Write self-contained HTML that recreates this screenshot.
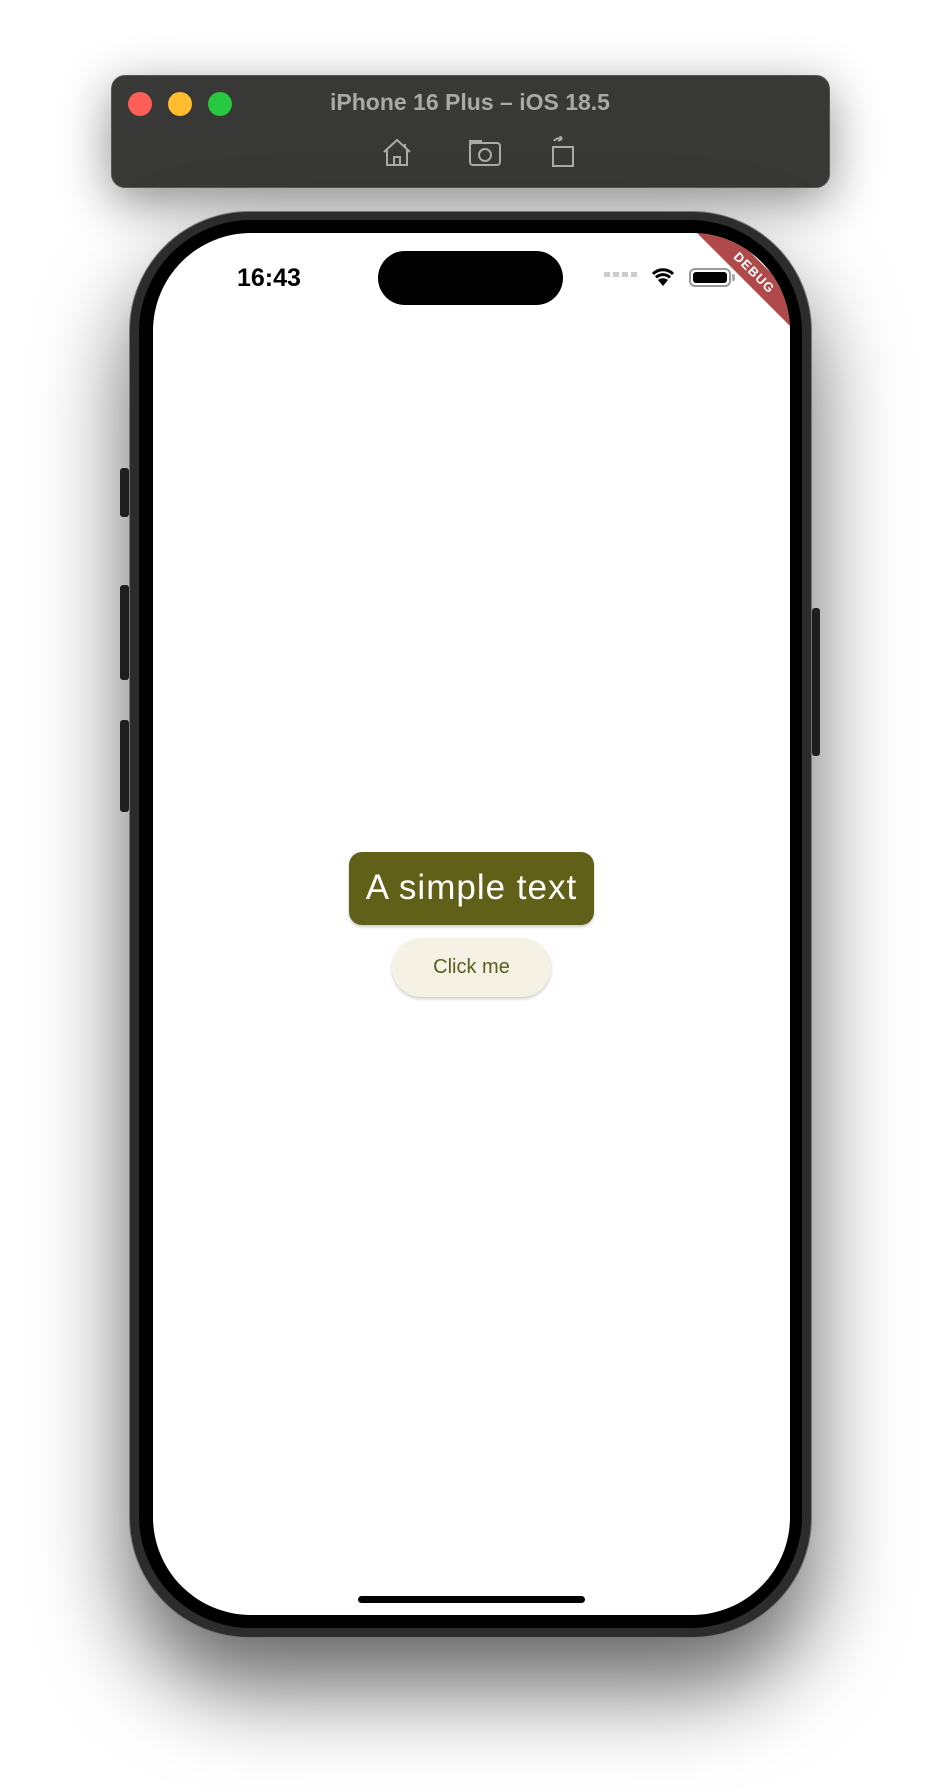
<!DOCTYPE html>
<html><head><meta charset="utf-8"><style>
*{margin:0;padding:0;box-sizing:border-box}
body{width:942px;height:1790px;background:#fff;position:relative;overflow:hidden;font-family:"Liberation Sans",sans-serif}
.tb{position:absolute;left:111px;top:75px;width:719px;height:113px;background:#383837;border-radius:14px;border:1px solid #555;box-shadow:0 14px 50px rgba(0,0,0,.45)}
.dot{position:absolute;top:92px;width:24px;height:24px;border-radius:50%}
.title{position:absolute;left:290px;top:89px;width:360px;text-align:center;color:#a9a9a9;font-weight:bold;font-size:23px}
.phone{position:absolute;left:129px;top:211px;width:683px;height:1427px;border-radius:120px;background:#2c2c2c;border:1px solid #777;box-shadow:0 50px 90px rgba(0,0,0,.6)}
.bez{position:absolute;left:139px;top:220px;width:663px;height:1408px;border-radius:112px;background:#000}
.scr{position:absolute;left:153px;top:233px;width:637px;height:1382px;border-radius:98px;background:#fff;overflow:hidden}
.sb{position:absolute;background:#2a2a2a;border-radius:3px}
</style></head><body>
<div class="tb"></div>
<div class="dot" style="left:128px;background:#fe5f57"></div>
<div class="dot" style="left:168px;background:#febc2e"></div>
<div class="dot" style="left:208px;background:#28c840"></div>
<div class="title">iPhone 16 Plus – iOS 18.5</div>
<svg style="position:absolute;left:378px;top:136px" width="210" height="34" viewBox="0 0 210 34" fill="none" stroke="#aaa" stroke-width="2">
<path d="M6 16 L19 4 L32 16 M9 13 V29 H29 V13 M16 29 V21 H22 V29 M27 8 V12"/>
<rect x="92" y="7" width="30" height="22" rx="3"/><path d="M92 12 V5 H104"/><circle cx="107" cy="19" r="6"/>
<path d="M175 11 H195 V30 H175 Z M176 5 A6 6 0 0 1 184 3 L182 0 M184 3 L180 5"/>
</svg>
<div class="sb" style="left:120px;top:468px;width:9px;height:49px"></div>
<div class="sb" style="left:120px;top:585px;width:9px;height:95px"></div>
<div class="sb" style="left:120px;top:720px;width:9px;height:92px"></div>
<div class="sb" style="left:812px;top:608px;width:8px;height:148px"></div>
<div class="phone"></div>
<div class="bez"></div>
<div class="scr">
 <div style="position:absolute;left:84px;top:31px;font-size:25px;font-weight:bold;color:#000">16:43</div>
 <div style="position:absolute;left:225px;top:18px;width:185px;height:54px;border-radius:27px;background:#000"></div>
 <div style="position:absolute;left:451px;top:39px;width:33px;height:5px;background:repeating-linear-gradient(90deg,#ccc 0 6px,transparent 6px 9px)"></div>
 <svg style="position:absolute;left:496px;top:32px" width="28" height="22" viewBox="0 0 28 22"><path d="M14 21 L9 15 A8 8 0 0 1 19 15 Z" fill="#000"/><path d="M4 9 A14 14 0 0 1 24 9 M7 12.5 A10 10 0 0 1 21 12.5" stroke="#000" stroke-width="3" fill="none"/></svg>
 <div style="position:absolute;left:536px;top:35px;width:42px;height:19px;border:2px solid #999;border-radius:6px;padding:2px"><div style="width:100%;height:100%;background:#000;border-radius:3px"></div></div>
 <div style="position:absolute;left:579px;top:41px;width:3px;height:7px;background:#aaa;border-radius:0 2px 2px 0"></div>
 <div style="position:absolute;left:526px;top:28px;width:150px;height:24px;background:#b04a4a;transform:rotate(45deg);color:#fff;font-size:13px;font-weight:bold;text-align:center;line-height:24px;letter-spacing:1px">DEBUG</div>
 <div style="position:absolute;left:196px;top:619px;width:245px;height:73px;background:#616018;border-radius:13px;box-shadow:0 2px 3px rgba(0,0,0,.2);color:#fff;font-size:35px;letter-spacing:1px;text-align:center;line-height:72px">A simple text</div>
 <div style="position:absolute;left:239px;top:705px;width:159px;height:59px;background:#f5f1e4;border-radius:30px;box-shadow:0 2px 3px rgba(0,0,0,.2);color:#5c5d1e;font-size:20px;text-align:center;line-height:59px">Click me</div>
 <div style="position:absolute;left:205px;top:1363px;width:227px;height:7px;border-radius:4px;background:#000"></div>
</div>
</body></html>
